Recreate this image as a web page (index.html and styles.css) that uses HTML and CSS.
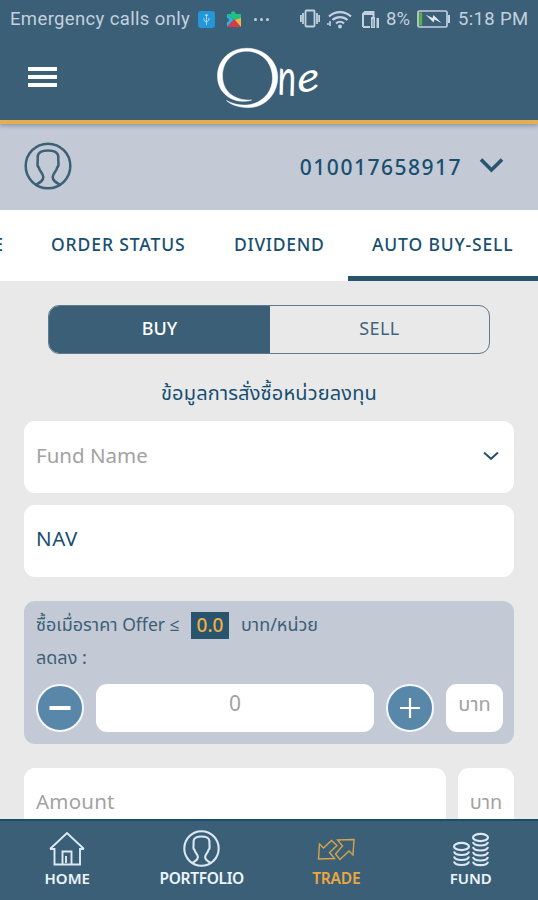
FILE: index.html
```html
<!DOCTYPE html>
<html lang="th">
<head>
<meta charset="utf-8">
<meta name="viewport" content="width=device-width">
<title>One</title>
<link rel="stylesheet" href="styles.css">
</head>
<body>
<svg class="defs" width="0" height="0">
  <symbol id="person" viewBox="0 0 48 48">
    <circle cx="24" cy="24" r="22.3"/>
    <path d="M12 42.600 C16 40.500 19.300 39 19.300 35 C19.300 31.500 15.500 29.500 14.800 25.500 C13.200 24.800 13.400 22.500 13.600 21 L13.800 13.800 C14.600 9.600 18 8.400 24 8.400 C30 8.400 33.400 9.600 34.200 13.800 L34.400 21 C34.600 22.500 34.800 24.800 33.200 25.500 C32.500 29.500 28.700 31.500 28.700 35 C28.700 39 32 40.500 36 42.600"/>
  </symbol>
</svg>
<div class="screen">
  <header class="top">
    <div class="status">
      <span class="carrier">Emergency calls only</span>
      <svg class="usb" width="17" height="17" viewBox="0 0 17 17"><rect width="17" height="17" rx="3" fill="#2596d8"/><path d="M8.500 3v11M6 7v2.500l2.500 1.500L11 9V7M7 5l1.500-2L10 5" fill="none" stroke="#a5d6f2" stroke-width="1"/></svg>
      <svg class="puzzle" width="16" height="18" viewBox="0 0 16 18"><path d="M1 4h4a2.300 2.300 0 1 1 4.500 0H15v6L8 10z" fill="#20c080"/><path d="M1 4v4a2 2 0 1 1 0 4v5L8 10z" fill="#29b6d8"/><path d="M1 17l7-8 7 8z" fill="#d83a4c"/><path d="M15 17V8l-6 2z" fill="#f0b83c"/></svg>
      <span class="dots"><i></i><i></i><i></i></span>
      <div class="status-right">
        <svg width="20" height="20" viewBox="0 0 20 20" class="line"><rect x="5.500" y="1.500" width="9" height="16" rx="1"/><path d="M3 4v11M.9 6v7M17 4v11M19.200 6v7"/></svg>
        <svg class="wifi" width="27" height="20" viewBox="0 0 27 20"><path d="M3 7.500a16 16 0 0 1 22 0M6.500 11a11 11 0 0 1 15 0M10 14.500a6 6 0 0 1 8 0" fill="none" stroke="#c3d0df" stroke-width="2.200"/><circle cx="14" cy="17.500" r="1.900" fill="#c3d0df"/><path d="M4 12v5M1 15h2" stroke="#c3d0df" stroke-width="1.600"/></svg>
        <svg class="sim" width="19" height="19" viewBox="0 0 19 19"><path d="M2 17V4l2-2h8.500v5M2 17h7" fill="none" stroke="#c3d0df" stroke-width="2"/><path d="M1 5l4-4h8v4zM10 7h4v11h-4zM15.500 8H18v10h-2.500z" fill="#c3d0df"/><path d="M12 9v8" stroke="#6a899e"/></svg>
        <span class="pct">8%</span>
        <svg class="battery" width="34" height="18" viewBox="0 0 34 18"><rect x="1" y="1" width="29" height="16" rx="1.500" fill="none" stroke="#c3d0df" stroke-width="1.700"/><path d="M2.200 2.500h3v13h-3z" fill="#58b33c"/><path d="M31 5h2v8h-2z" fill="#c3d0df"/><path d="M8.500 4.500l7 3.500 1-3 8 8-7-3.500-1 3z" fill="#dfe8f0"/></svg>
        <span class="clock">5:18 PM</span>
      </div>
    </div>
    <div class="brand-row">
      <div class="burger"><i></i><i></i><i></i></div>
      <svg class="logo" width="110" height="64" viewBox="0 0 110 64">
        <path fill="#fff" stroke="#fff" stroke-width=".5" d="M34.700 53C20 58 0.500 49 0.500 29C0.500 13 13 1.300 30 1.300C47 1.300 60.700 14 60.700 30C60.700 48 47 60.500 32 60.500C22 60.500 14 58 9.500 53.500C17 57.500 24 58.500 30 58C44 57 55.500 46 55.500 31C55.500 15 44 4.200 30 4.200C15 4.200 5 15 5.500 30C6 45 18 54 34.700 53Z"/>
        <text class="script" transform="translate(61.500 47.500) rotate(6) skewX(9) scale(.92 1.350)">n</text>
        <text class="script" transform="translate(81 46.500) rotate(-12) skewX(-8) scale(1.250 1.020)">e</text>
      </svg>
    </div>
  </header>
  <section class="account">
    <svg class="avatar" width="48" height="48"><use href="#person"/></svg>
    <span class="number">010017658917</span>
    <svg class="chev" width="25" height="17" viewBox="0 0 25 17"><path d="M2 2.500L12.500 13 23 2.500"/></svg>
  </section>
  <nav class="tabs">
    <span class="tab cut">E</span>
    <span class="tab order">ORDER STATUS</span>
    <span class="tab dividend">DIVIDEND</span>
    <span class="tab auto">AUTO BUY-SELL</span>
  </nav>
  <main class="content">
    <div class="toggle"><div class="buy">BUY</div><div class="sell">SELL</div></div>
    <h1 class="heading"><span>ข้อมูลการสั่งซื้อหน่วยลงทุน</span></h1>
    <div class="field fund"><span>Fund Name</span><svg width="16" height="10" viewBox="0 0 16 10"><path d="M1 1.500L8 7.800 15 1.500"/></svg></div>
    <div class="field nav-field">NAV</div>
    <section class="offer">
      <div class="offer-line"><span class="cond">ซื้อเมื่อราคา <b>Offer ≤</b></span><span class="price">0.0</span><span class="per">บาท/หน่วย</span></div>
      <div class="drop">ลดลง :</div>
      <div class="stepper">
        <div class="round"><svg width="24" height="24" viewBox="0 0 24 24"><path class="minus" d="M1.500 12h21"/></svg></div>
        <div class="value">0</div>
        <div class="round"><svg width="24" height="24" viewBox="0 0 24 24"><path d="M2 12h20M12 2v20"/></svg></div>
        <div class="unit">บาท</div>
      </div>
    </section>
    <div class="amount-row"><div class="field amount">Amount</div><div class="field amount-unit">บาท</div></div>
  </main>
  <nav class="bottom">
    <div class="item">
      <svg width="36" height="36" viewBox="0 0 36 36"><path d="M1 18L18 2l17 16M1 18h4.500v15.500H31V18h4M13.500 33V20.500h9V33M17 32V25"/></svg>
      <span class="w-home">HOME</span>
    </div>
    <div class="item">
      <svg class="port" width="37" height="37"><use href="#person"/></svg>
      <span class="w-port">PORTFOLIO</span>
    </div>
    <div class="item active">
      <svg class="trade" width="38" height="24" viewBox="0 0 38 24"><path d="M1.500 21L2.500 6l4 4L14.500 2.500 20 7.500 12.500 14.500l5 6z"/><path d="M20.500 2L37 1.500 36 17l-4-4-9 8.500-4.500-5.500 7-8z"/></svg>
      <span class="w-trade">TRADE</span>
    </div>
    <div class="item">
      <svg width="38" height="36" viewBox="0 0 38 36"><g stroke-width="2.100"><ellipse cx="9.500" cy="15.500" rx="7.500" ry="3.600"/><path d="M2 20.500c1 4.600 14 4.600 15 0M2 25.500c1 4.600 14 4.600 15 0M2 30.500c1 4.600 14 4.600 15 0"/><ellipse cx="28.500" cy="6.500" rx="7.500" ry="3.600"/><path d="M21 11c1 4.600 14 4.600 15 0M21 16c1 4.600 14 4.600 15 0M21 21c1 4.600 14 4.600 15 0M21 26c1 4.600 14 4.600 15 0M21 30.700c1 4.600 14 4.600 15 0"/></g></svg>
      <span class="w-fund">FUND</span>
    </div>
  </nav>
</div>
</body>
</html>
```

FILE: styles.css
```css
* { box-sizing: border-box; }
body { margin: 0; font-family: "Noto Sans", "Noto Sans Thai", "Open Sans", sans-serif; color: #174f70; }
svg { display: block; flex: none; }
.defs { position: absolute; }
.screen { width: 538px; height: 900px; overflow: hidden; display: flex; flex-direction: column; background: #e9e9e9; }

.top { height: 124px; flex: none; background: #3b5f77; border-bottom: 4px solid #e5ae51; box-shadow: 0 2px 4px rgba(60, 80, 100, .4); z-index: 1; }
.status { height: 38px; display: flex; align-items: center; padding: 0 9px 0 10px; font: 18.5px/38px Roboto, sans-serif; color: #c3d0df; }
.carrier { width: 188px; white-space: nowrap; letter-spacing: .36px; }
.puzzle { margin-left: 11px; }
.dots { display: flex; gap: 3px; margin-left: 12px; }
.dots i { width: 3px; height: 3px; border-radius: 50%; background: #c3d0df; }
.status-right { margin-left: auto; display: flex; align-items: center; }
.line { fill: none; stroke: #c3d0df; stroke-width: 1.800; }
.wifi { margin-left: 6px; }
.sim { margin-left: 8px; }
.pct { margin: 0 6px 0 6px; width: 25px; }
.clock { margin-left: 7px; width: 71px; white-space: nowrap; letter-spacing: .35px; }
.brand-row { display: flex; align-items: flex-start; padding: 9px 0 0 28px; }
.burger { width: 29px; padding-top: 20px; display: flex; flex-direction: column; gap: 4px; }
.burger i { height: 4px; background: #fff; }
.logo { margin-left: 160px; overflow: visible; }
.script { font: italic 38px Lato, sans-serif; fill: #fff; }

.account { height: 86px; flex: none; display: flex; align-items: center; padding: 0 34px 0 24px; background: #c3c9d5; }
.avatar { margin-bottom: 2px; fill: none; stroke: #3b6079; stroke-width: 2.500; }
.number { margin-left: auto; font-size: 21px; font-weight: 500; letter-spacing: 1.500px; }
.chev { margin-left: 17px; margin-bottom: 4px; fill: none; stroke: #28546e; stroke-width: 3.600; }

.tabs { height: 71px; flex: none; display: flex; background: #fff; font-size: 17.5px; font-weight: 500; line-height: 68px; white-space: nowrap; }
.tab { flex: none; }
.cut { width: 3px; display: flex; justify-content: flex-end; }
.order { margin-left: 48px; width: 183px; letter-spacing: .9px; }
.dividend { width: 114px; letter-spacing: .7px; }
.auto { width: 190px; padding-left: 24px; letter-spacing: .85px; border-bottom: 5px solid #28546e; }

.content { flex: 1; min-height: 0; overflow: hidden; padding: 24px 24px 0; }
.toggle { height: 49px; margin: 0 24px; display: flex; border: 1.500px solid #5d7a92; border-radius: 11px; overflow: hidden; font-size: 18px; line-height: 45px; text-align: center; }
.buy { width: 221px; background: #3b5f77; color: #fff; font-weight: 500; }
.sell { flex: 1; color: #3f647d; letter-spacing: .4px; }
.heading { margin: 0; height: 67px; font-size: 20px; font-weight: 400; line-height: 78px; text-align: center; white-space: nowrap; letter-spacing: .15px; }
.field { height: 72px; border-radius: 11px; padding: 0 12px; background: #fff; font-size: 20.5px; line-height: 67px; color: #a2a2a2; }
.fund { display: flex; align-items: center; justify-content: space-between; padding-right: 15px; }
.fund span { height: 70px; }
.fund svg { margin-bottom: 2px; fill: none; stroke: #28546e; stroke-width: 2; }
.nav-field { margin-top: 12px; color: #174f70; letter-spacing: .6px; }
.offer { height: 143px; margin-top: 24px; padding: 7px 11px 0 12px; border-radius: 11px; background: #c3c9d5; color: #3b5f77; font-size: 18px; }
.offer-line { height: 34px; display: flex; align-items: center; white-space: nowrap; }
.cond { width: 155px; }
.cond b { font-weight: 400; font-size: 17.5px; }
.price { width: 38px; height: 27px; line-height: 27px; text-align: center; background: #28546e; color: #eeb04b; font-size: 19px; font-weight: 500; }
.per { margin-left: 12px; }
.drop { height: 42px; line-height: 31px; }
.stepper { display: flex; gap: 12px; }
.round { width: 48px; height: 48px; flex: none; border-radius: 50%; border: 2px solid #f4f8fb; background: #5887aa; display: grid; place-items: center; }
.round svg { fill: none; stroke: #fff; stroke-width: 2.200; }
.round .minus { stroke-width: 4; }
.value { flex: 1; height: 48px; border-radius: 11px; background: #fff; color: #a2a2a2; text-align: center; font-size: 21px; line-height: 39px; }
.unit { width: 57px; height: 48px; border-radius: 11px; background: #fff; color: #a2a2a2; text-align: center; font-size: 20px; line-height: 39px; }
.amount-row { display: flex; gap: 12px; margin-top: 24px; }
.amount { flex: 1; letter-spacing: .2px; }
.amount-unit { width: 56px; padding: 0; text-align: center; font-size: 20px; }

.bottom { height: 81px; flex: none; display: grid; grid-template-columns: repeat(4, 1fr); background: #3b5f77; border-top: 2px solid #174f68; color: #edf5fc; }
.item { height: 67px; display: flex; flex-direction: column; align-items: center; justify-content: flex-end; }
.item svg { fill: none; stroke: #dce9f5; stroke-width: 1.900; }
.item .port { stroke-width: 2.700; }
.item span { margin-top: 1px; font-size: 16px; font-weight: 600; line-height: 20px; }
.item .w-home { font-size: 15px; }
.item .w-port { font-size: 15.500px; letter-spacing: -.35px; }
.item .w-trade { font-size: 15.500px; letter-spacing: -.2px; }
.item .w-fund { font-size: 15px; }
.active { color: #eaa83f; }
.item .trade { stroke: #d6a44b; stroke-width: 1.400; margin-bottom: 5px; }
```
